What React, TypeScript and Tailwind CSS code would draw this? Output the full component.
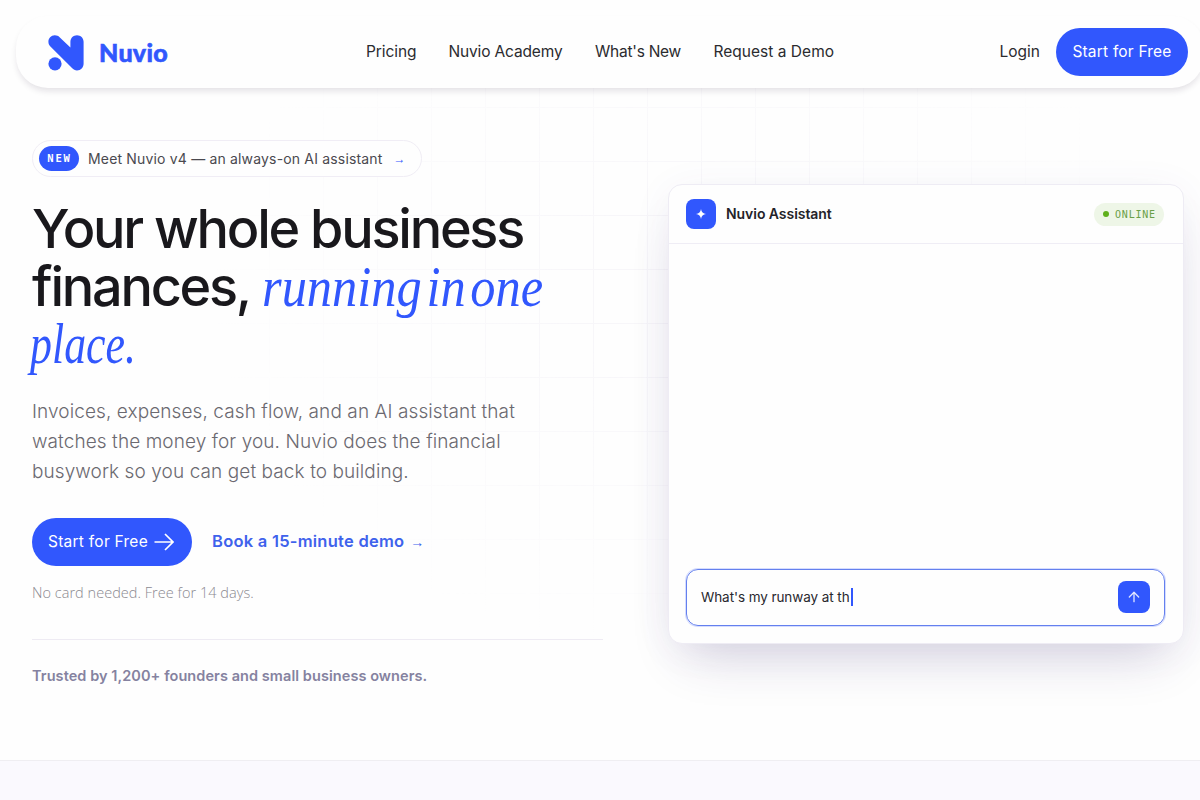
import { ArrowUp } from "lucide-react";

const navLinks = [
  { label: "Pricing", className: "w-[50px] tracking-[-0.08px]" },
  { label: "Nuvio Academy", className: "w-[114px] tracking-[-0.15px]" },
  { label: "What's New", className: "w-[86px] tracking-[-0.25px]" },
  { label: "Request a Demo", className: "w-[121px] tracking-[0.02px]" },
];

function Logo() {
  return (
    <a href="#" className="flex items-center text-[#3157fd]">
      <svg
        width="36"
        height="36"
        viewBox="0 0 36 36"
        fill="currentColor"
        className="mt-px"
      >
        <path d="M6.8 0.3C3 0.3 0.4 3.3 0.4 6.8c0 2 .8 3.500 2 4.700l21.600 21.600c1.500 1.500 3 2.300 5 2.300 3.800 0 6.600-3 6.600-6.700V6.800c0-3.700-3-6.500-6.600-6.500s-6.600 2.800-6.600 6.500v5.700L11.600 2.200C10.300 1 8.800 .3 6.800 .3z" />
        <circle cx="7" cy="28.800" r="6.600" />
      </svg>
      <span className="ml-[15px] font-[Lato] text-[25px] leading-8 font-black tracking-[0.3px] [-webkit-text-stroke:0.6px_#3157fd]">
        Nuvio
      </span>
    </a>
  );
}

function Header() {
  return (
    <header className="relative z-10 mt-4 ml-4 flex h-[72px] w-[1188px] shrink-0 items-center rounded-[32px] bg-[#fefefe] pr-4 pl-8 shadow-[0_4px_6px_-1px_rgba(30,20,50,0.12)]">
      <Logo />
      <nav className="ml-[198px] flex gap-[32.500px] text-[15.500px] text-[#2b2b2f]">
        {navLinks.map((link) => (
          <a
            key={link.label}
            href="#"
            className={`whitespace-nowrap ${link.className}`}
          >
            {link.label}
          </a>
        ))}
      </nav>
      <div className="ml-auto flex items-center gap-4">
        <a href="#" className="text-[15.500px] text-[#2b2b2f]">
          Login
        </a>
        <a
          href="#"
          className="flex h-12 w-[132px] items-center justify-center rounded-full bg-[#3157fd] text-[15.500px] tracking-[0.2px] whitespace-nowrap text-white"
        >
          Start for Free
        </a>
      </div>
    </header>
  );
}

function HeroCopy() {
  return (
    <div className="flex w-[572px] shrink-0 flex-col items-start">
      {/* Announcement */}
      <a
        href="#"
        className="flex h-[37px] w-[390px] items-center rounded-full border border-[#f0edf5] bg-[#fefefe] pl-1.5"
      >
        <span className="flex h-[25px] w-10 items-center justify-center rounded-full bg-[#3157fd] pl-px font-['DejaVu_Sans_Mono'] text-[10.500px] font-bold tracking-[1.800px] text-white">
          NEW
        </span>
        <span className="ml-[9px] text-[14px] tracking-[0.17px] whitespace-nowrap text-[#4a494f]">
          Meet Nuvio v4 — an always-on AI assistant
        </span>
        <span className="mt-px ml-[11px] font-['Liberation_Sans'] text-[12px] font-bold text-[#3157fd]">
          →
        </span>
      </a>

      <h1 className="mt-[23px] h-[174px] text-[54px] leading-[57.500px] font-medium tracking-[-2.250px] whitespace-nowrap text-[#19181c]">
        Your whole business
        <br />
        finances,{" "}
        <em className="inline-block origin-left scale-x-[0.885] font-['Liberation_Serif'] text-[57px] leading-[40px] font-normal tracking-normal text-[#3157fd] [word-spacing:-9px]">
          running in one
        </em>
        <br />
        <em className="-ml-[2px] inline-block origin-left scale-x-[0.77] font-['Liberation_Serif'] text-[57px] leading-[40px] font-normal tracking-normal text-[#3157fd]">
          place.
        </em>
      </h1>

      <p className="mt-[23px] text-[19px] leading-[30px] font-light tracking-[0.090px] whitespace-nowrap text-[#6b6970]">
        Invoices, expenses, cash flow, and an AI assistant that
        <br />
        watches the money for you. Nuvio does the financial
        <br />
        busywork so you can get back to building.
      </p>

      <div className="mt-[31px] flex items-center">
        <a
          href="#"
          className="flex h-12 w-40 items-center rounded-full bg-[#3157fd] pl-4 text-[15.500px] tracking-[0.25px] whitespace-nowrap text-white"
        >
          Start for Free
          <svg
            width="20"
            height="18"
            viewBox="0 0 20 18"
            fill="none"
            stroke="currentColor"
            strokeWidth="1.7"
            className="ml-1.5"
          >
            <path d="M0.500 9H19M11 1l8 8-8 8" />
          </svg>
        </a>
        <a
          href="#"
          className="mb-0.5 ml-5 flex items-center text-[16.500px] font-semibold tracking-[0.250px] whitespace-nowrap text-[#3f62ec]"
        >
          Book a 15-minute demo
          <span className="mt-0.5 ml-1.5 font-['Liberation_Sans'] text-[14px] font-bold">
            →
          </span>
        </a>
      </div>

      <p className="mt-[17px] font-['Open_Sans'] text-[14.500px] leading-5 font-light tracking-[0.030px] text-[#8b8990]">
        No card needed. Free for 14 days.
      </p>
      <div className="mt-9 h-px w-[571px] bg-[#eeebf3]" />
      <p className="mt-[26px] text-[14.500px] leading-5 font-semibold tracking-[0.070px] whitespace-nowrap text-[#8582a0]">
        Trusted by 1,200+ founders and small business owners.
      </p>
    </div>
  );
}

function AssistantCard() {
  return (
    <div className="mt-11 flex h-[460px] w-[516px] shrink-0 flex-col rounded-[14px] border border-[#eeecf4] bg-[#fefefe] shadow-[0_28px_50px_-18px_rgba(50,35,100,0.2),0_6px_40px_rgba(80,60,150,0.06)]">
      <div className="flex h-[59px] items-center border-b border-[#efedf5] pr-[19px] pl-[17px]">
        <div className="flex size-[30px] items-center justify-center rounded-[8px] bg-[#3157fd]">
          <svg width="10" height="10" viewBox="0 0 10 10" fill="white">
            <path d="M5 0Q5.600 4.400 10 5 5.600 5.600 5 10 4.400 5.600 0 5 4.400 4.400 5 0z" />
          </svg>
        </div>
        <span className="mb-px ml-2.5 text-[14px] font-semibold tracking-[-0.05px] text-[#242329]">
          Nuvio Assistant
        </span>
        <span className="ml-auto flex h-[23px] w-[70px] items-center rounded-full bg-[#eef6e7] pl-[9px] font-['DejaVu_Sans_Mono'] text-[10px] tracking-[0.800px] text-[#6aa047]">
          <span className="mr-1.5 size-1.5 shrink-0 rounded-full bg-[#5fb01c]" />
          ONLINE
        </span>
      </div>
      <div className="flex-1" />
      <div className="mr-[18px] mb-[17px] ml-[17px] flex h-[57px] items-center rounded-[12px] border-[1.500px] border-[#6480ee] px-3.5 pb-px shadow-[0_0_0_1px_rgba(49,87,253,0.2)]">
        <span className="text-[13.500px] tracking-[-0.080px] whitespace-nowrap text-[#29282e]">
          What's my runway at th
        </span>
        <span className="ml-px h-[18px] w-[2px] bg-[#3157fd]" />
        <div className="ml-auto flex size-8 items-center justify-center rounded-[8px] bg-[#3157fd] text-[#dfe5ff]">
          <ArrowUp size={16} strokeWidth={2} />
        </div>
      </div>
    </div>
  );
}

export default function App() {
  return (
    <div className="relative flex h-screen w-full flex-col overflow-hidden bg-[#fefefe] font-[Inter,sans-serif]">
      {/* Faint grid behind the hero */}
      <div className="pointer-events-none absolute inset-x-0 top-[88px] h-[672px] bg-[linear-gradient(to_right,#efedf4_1px,transparent_1px),linear-gradient(to_bottom,#efedf4_1px,transparent_1px)] mask-[radial-gradient(ellipse_560px_430px_at_680px_200px,black_20%,transparent_85%)] bg-[size:54px_54px] bg-[position:-1px_19px] opacity-45" />
      <Header />
      <main className="relative flex h-[672px] shrink-0 gap-16 px-8 pt-[52px]">
        <HeroCopy />
        <AssistantCard />
      </main>
      <section className="relative h-10 border-t border-[#efeef2] bg-[#faf9fe]" />
    </div>
  );
}
